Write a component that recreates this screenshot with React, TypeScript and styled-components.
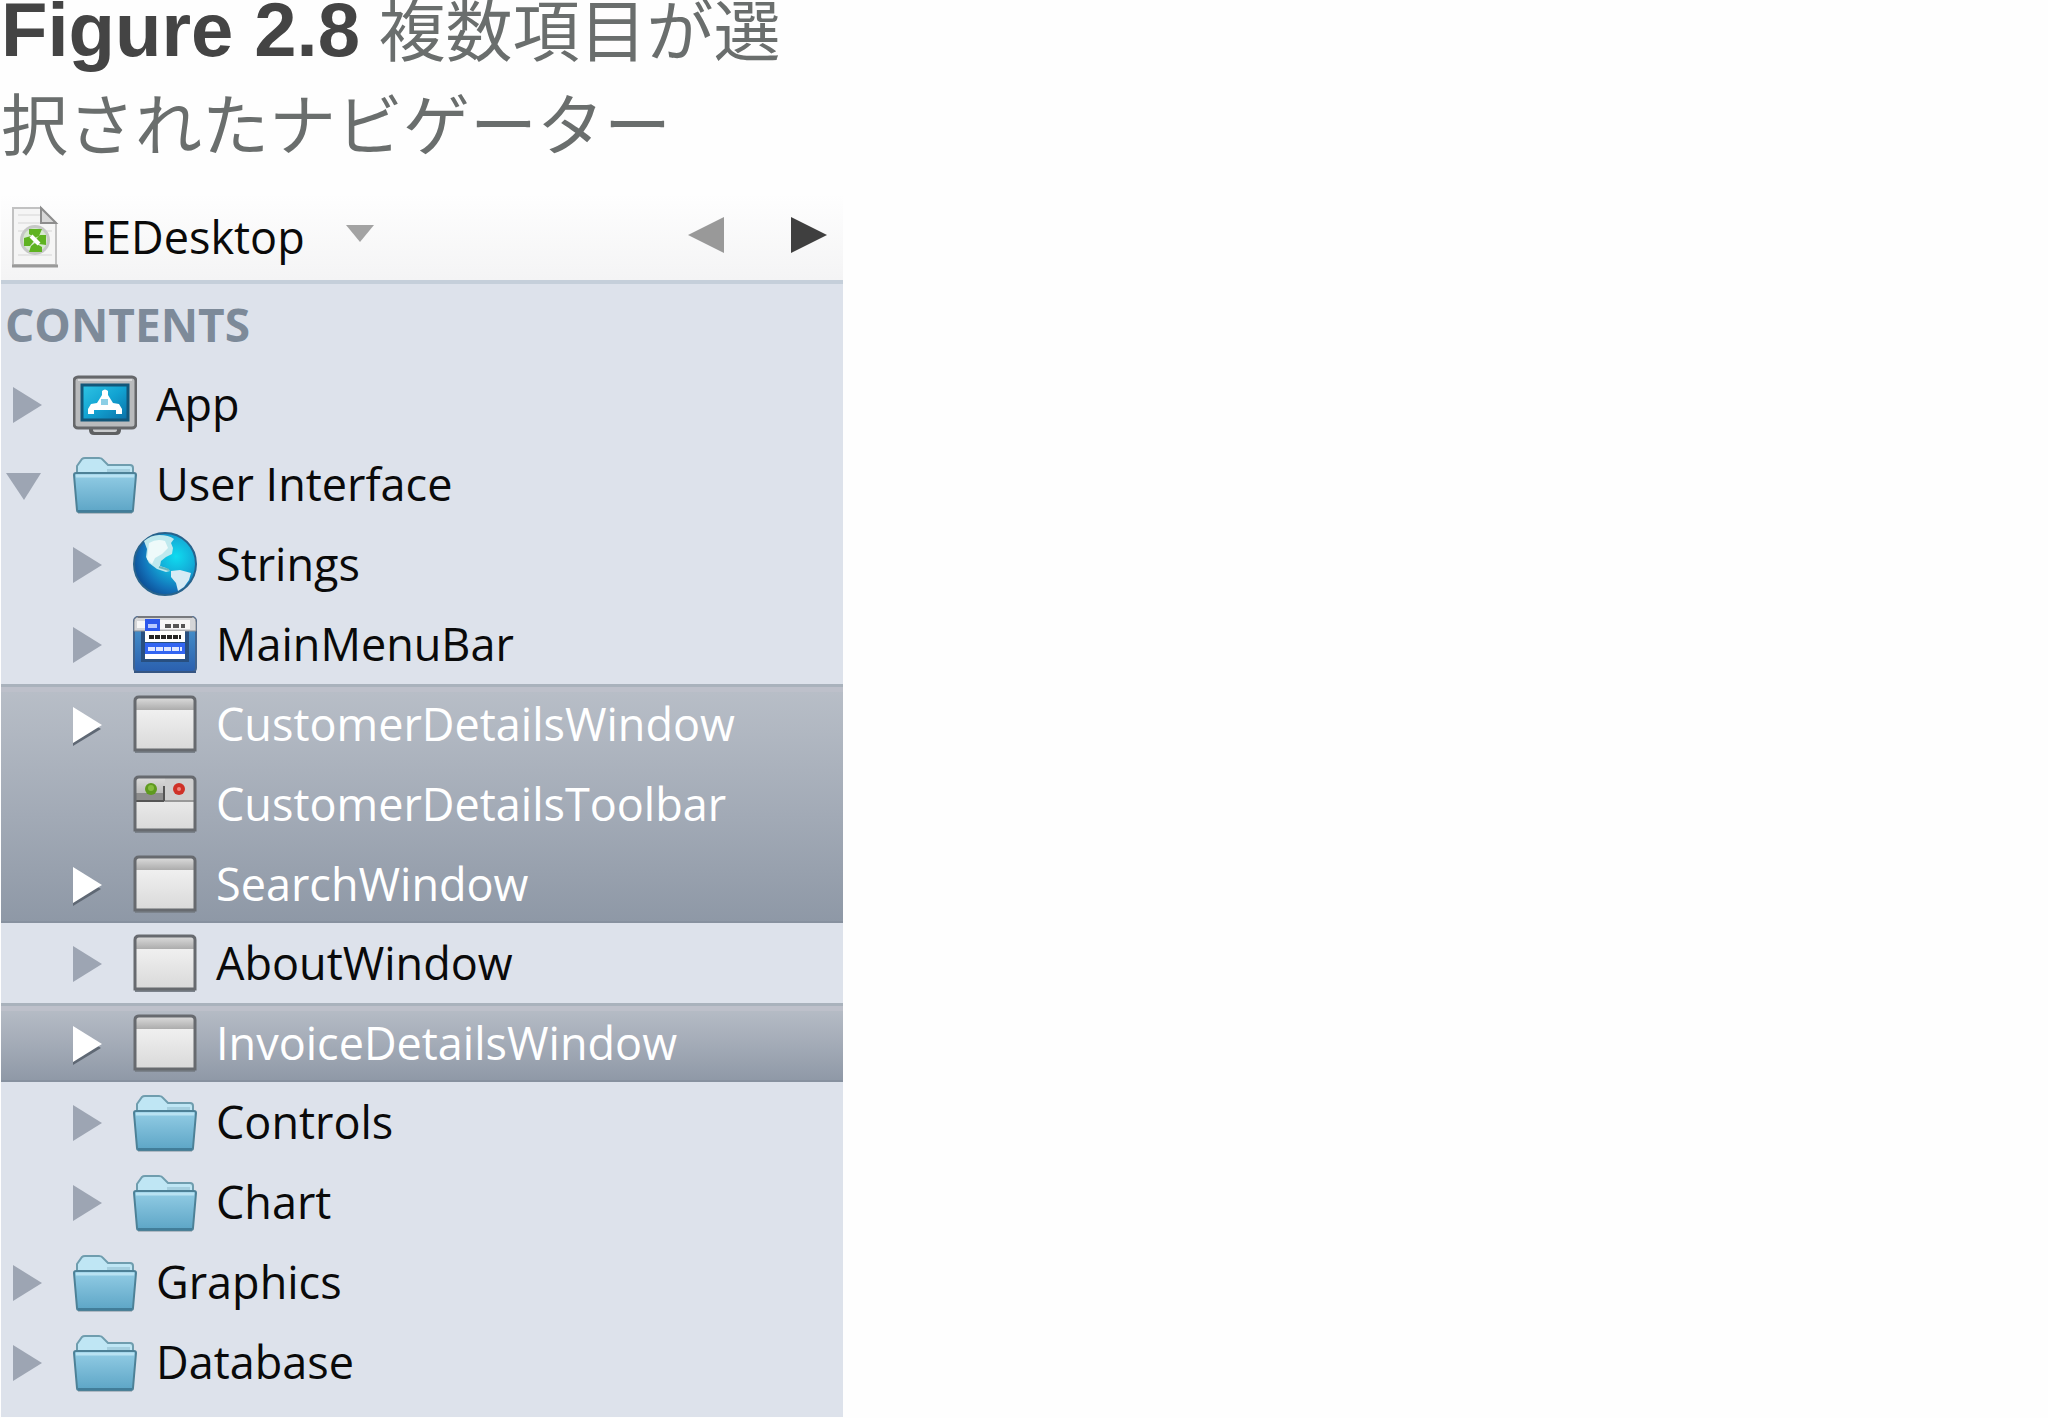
import React, { useState } from "react";
import styled, { createGlobalStyle, css } from "styled-components";

const GlobalStyle = createGlobalStyle`
  body {
    margin: 0;
    background: #fefefe;
  }
  * { box-sizing: border-box; }
`;

const uiFont = `"Open Sans", "Noto Sans", sans-serif`;

const Figure = styled.figure`
  display: flex;
  flex-direction: column;
  max-width: 843px;
  margin: 0;
  padding-left: 1px;
`;

const Caption = styled.figcaption`
  margin: -14px 0 20px;
  padding-right: 16px;
  font: 400 67px/94px "Liberation Sans", "Noto Sans CJK JP", sans-serif;
  color: #6a6e6d;
`;

const CaptionNumber = styled.strong`
  font-size: 76px;
  font-weight: 700;
  line-height: 1;
  color: #444;
`;

const Panel = styled.section`
  background: #dde2eb;
  padding-bottom: 15px;
  font-family: ${uiFont};
  font-size: 45px;
  line-height: 60px;
  color: #0a0a0a;
`;

const buttonReset = css`
  border: 0;
  margin: 0;
  padding: 0;
  background: none;
  color: inherit;
  font: inherit;
  cursor: pointer;
`;

const Header = styled.header`
  display: flex;
  align-items: center;
  justify-content: space-between;
  height: 90px;
  padding: 0 16px 0 8px;
  background: linear-gradient(#fefefe, #f4f4f5);
  border-bottom: 4px solid #c5cfda;
`;

const ProjectPicker = styled.button`
  ${buttonReset}
  display: flex;
  align-items: center;
`;

const ProjectName = styled.span`
  padding: 0 40px 0 20px;
`;

const History = styled.nav`
  display: flex;
  gap: 67px;
`;

const HistoryButton = styled.button`
  ${buttonReset}
  display: flex;
`;

const SectionTitle = styled.h2`
  margin: 0;
  padding: 10px 4px;
  font-size: 46px;
  font-weight: 700;
  color: #7d8a99;
`;

const Tree = styled.div`
  display: flex;
  flex-direction: column;
`;

const Selection = styled.div`
  background: linear-gradient(#b9bfc8, #a2aab6 55%, #8e98a6);
  box-shadow: inset 0 3px #a9b2bc, inset 0 8px #bdc0ca, inset 0 -2px #87919f;
  color: #fff;
  font-weight: 500;

  & > :last-child {
    height: 79px;
  }
`;

const TreeRow = styled.div<{ $level: number }>`
  display: flex;
  align-items: center;
  height: 80px;
  padding-left: ${(p) => 5 + p.$level * 60}px;
`;

const Disclosure = styled.button`
  ${buttonReset}
  display: flex;
  width: 67px;
`;

const DisclosureSpace = styled.span`
  width: 67px;
`;

const Label = styled.span`
  padding-left: 19px;
  white-space: nowrap;
`;

const Icon = styled.svg`
  display: block;
  flex: none;
`;

type Kind = "app" | "folder" | "globe" | "menu" | "window" | "toolbar";

const Arrow = ({ open, light }: { open: boolean; light: boolean }) => (
  <Icon width="36" height="44" viewBox="0 0 36 44">
    {light && <path d="M7 10 35 27 7 44z" fill="#5f6874" />}
    {open ? (
      <path d="M0 11h35L18 38z" fill="#9da5b3" />
    ) : (
      <path d="M7 5 36 23 7 41z" fill={light ? "#fff" : "#9da5b3"} />
    )}
  </Icon>
);

const ItemIcon = ({ kind, id }: { kind: Kind; id: string }) => (
  <Icon width="64" height="64" viewBox="0 0 64 64" aria-hidden="true">
    {kind === "app" && (
      <>
        <defs>
          <linearGradient id={id} x1="0" y1="0" x2="1" y2="1">
            <stop offset="0" stopColor="#2fc4e4" />
            <stop offset=".5" stopColor="#12a3d2" />
            <stop offset="1" stopColor="#0a6fa6" />
          </linearGradient>
        </defs>
        <path d="M16 54h32v4q0 5-5 5H21q-5 0-5-5z" fill="#5e6062" />
        <path d="M20 56h24v2q0 2-3 2H23q-3 0-3-2z" fill="#c9cbcd" />
        <rect x="1" y="5" width="62" height="51" rx="4" fill="#b9bbbd" stroke="#65676a" strokeWidth="3" />
        <path d="M5 8h54" stroke="#d9dadc" strokeWidth="2" />
        <rect x="9" y="13" width="46" height="35" fill={`url(#${id})`} stroke="#12577a" strokeWidth="3" />
        <path
          d="M29 19q3-3 6 0v4l5 8 6 1 3 5v5h-6v-4H21v4h-6v-5l3-5 6-1 5-8z"
          fill="#fff"
        />
        <path d="M28 27h7v6h-7z" fill="#8ccfe6" />
      </>
    )}
    {kind === "folder" && (
      <>
        <defs>
          <linearGradient id={id} x1="0" y1="0" x2="0" y2="1">
            <stop offset="0" stopColor="#93cde5" />
            <stop offset="1" stopColor="#5da5c6" />
          </linearGradient>
        </defs>
        <path d="M5 59h54v3H5z" fill="#aeb9c3" />
        <path d="M4 24V14l5-7q1-1 3-1h14q3 0 4 2l5 5h22q3 0 3 3v10z" fill="#bfe6f4" stroke="#6f9dae" strokeWidth="2" />
        <path d="M34 17h23v5H34z" fill="#a5cfdf" />
        <path d="M1 23q0-2 2-2h58q2 0 2 2l-3 35q0 2-2 2H6q-2 0-2-2z" fill={`url(#${id})`} stroke="#4d8197" strokeWidth="2" />
        <path d="M3 24h58" stroke="#b9e2f2" strokeWidth="3" />
        <path d="M5 59h54" stroke="#427d99" strokeWidth="2" />
      </>
    )}
    {kind === "globe" && (
      <>
        <defs>
          <radialGradient id={id} cx=".68" cy=".38" r=".72">
            <stop offset="0" stopColor="#0fdcf0" />
            <stop offset=".4" stopColor="#13add8" />
            <stop offset=".75" stopColor="#1272b9" />
            <stop offset="1" stopColor="#0d4d94" />
          </radialGradient>
        </defs>
        <circle cx="32" cy="32" r="31" fill={`url(#${id})`} stroke="#28638c" strokeWidth="2" />
        <path d="M11 9q7-6 15-6 10 0 15 4l-3 4 2 5-1 6-6 3-5 4-1 5 6 2 4 3-4 1-9-3-8-6-3-6 1-8z" fill="#bfe9ee" />
        <path d="M16 11q8-5 16-2l3 7-6 6-7 4-3 6-5-5z" fill="#eefafa" />
        <path d="m38 39 9-1 11 3-2 7-5 7-6 4-2-8-5-6z" fill="#d6ebf5" />
        <path d="m26 35 10 3" stroke="#6cb7bd" strokeWidth="2" />
      </>
    )}
    {kind === "menu" && (
      <>
        <defs>
          <linearGradient id={id} x1="0" y1="0" x2="0" y2="1">
            <stop offset="0" stopColor="#4b9bd0" />
            <stop offset="1" stopColor="#2a5fae" />
          </linearGradient>
        </defs>
        <rect x="1" y="5" width="62" height="55" rx="4" fill={`url(#${id})`} stroke="#42638c" strokeWidth="2" />
        <path d="M1 59h62v2H1z" fill="#355582" />
        <path d="M8 18h48v32H8z" fill="#284f80" />
        <path d="M1 10q0-5 5-5h52q5 0 5 5v9H1z" fill="#d5d6d8" stroke="#8b8d91" />
        <path d="M5 5h54" stroke="#77797d" strokeWidth="2" />
        <path d="M4 9h8v7H4zM27 8h30v9H27z" fill="#f7f7f7" />
        <path d="M12 7h15v12H12z" fill="#2d58ec" />
        <path d="M15 14h9" stroke="#b9c9ff" strokeWidth="4" />
        <path d="M32 14h20" stroke="#555" strokeWidth="4" strokeDasharray="6 2" />
        <path d="M12 19h40v11H12zM12 42h40v5H12z" fill="#fff" />
        <path d="M16 25h32" stroke="#252525" strokeWidth="4" strokeDasharray="5 1" />
        <path d="M12 31h40v11H12z" fill="#3265f2" />
        <path d="M15 37h34" stroke="#dfe7ff" strokeWidth="4" strokeDasharray="7 1" />
      </>
    )}
    {(kind === "window" || kind === "toolbar") && (
      <>
        <defs>
          <linearGradient id={id} x1="0" y1="0" x2="0" y2="1">
            <stop offset="0" stopColor="#f7f7f7" />
            <stop offset="1" stopColor="#d9d9d9" />
          </linearGradient>
          <linearGradient id={`${id}-bar`} x1="0" y1="0" x2="0" y2="1">
            <stop offset="0" stopColor="#dadada" />
            <stop offset="1" stopColor="#acacac" />
          </linearGradient>
        </defs>
        <path d="M2 58h60v3H2z" fill="#7b828b" />
        <path d="M2 9q0-4 4-4h52q4 0 4 4v49H2z" fill={`url(#${id})`} />
        {kind === "window" ? (
          <path d="M3 9q0-3 3-3h52q3 0 3 3v9H3z" fill={`url(#${id}-bar)`} />
        ) : (
          <>
            <path d="M3 6h29v24H3z" fill={`url(#${id}-bar)`} />
            <path d="M32 6h29v24H32z" fill="#cfcfcf" />
            <path d="M3 21h28v8H3z" fill="#8d8d8d" />
            <path d="M3 29h28M31 14v15" stroke="#555" strokeWidth="2" />
            <path d="M32 29h29" stroke="#999" strokeWidth="2" />
            <circle cx="18" cy="17" r="6" fill="#5f9a1f" />
            <circle cx="18" cy="16" r="3" fill="#86bd3f" />
            <circle cx="46" cy="17" r="6" fill="#cf3127" />
            <circle cx="46" cy="17" r="2" fill="#f0877f" />
          </>
        )}
        <path d="M2 9q0-4 4-4h52q4 0 4 4v49H2z" fill="none" stroke="#676a6f" strokeWidth="3" />
      </>
    )}
  </Icon>
);

const DocumentIcon = () => (
  <Icon width="52" height="64" viewBox="0 0 52 64" aria-hidden="true">
    <path d="M4 3h28l15 15v42H4z" fill="#f5f5f5" stroke="#c2c2c2" strokeWidth="2" />
    <path d="M9 10h24M9 18h34M9 26h34M9 50h34" stroke="#e5e5e5" strokeWidth="2" />
    <path d="M32 3v15h15z" fill="#d8d8d8" stroke="#8d8d8d" strokeWidth="2" />
    <path d="M3 61h46" stroke="#9a9a9a" strokeWidth="3" />
    <circle cx="26" cy="35" r="15" fill="#c6c8c6" />
    <circle cx="26" cy="35" r="12" fill="#d7ead0" />
    <path d="M20 24h13l-3 7-4 2-6-4zM15 33l7-2 3 5-4 5h-6zM37 30v10l-7-1-3-5 4-4zM20 47l2-6 4-3 7 4v5z" fill="#5fb321" />
    <path d="m22 31 8 8" stroke="#fff" strokeWidth="4" />
  </Icon>
);

interface Item {
  name: string;
  kind: Kind;
  level: number;
  open?: boolean;
  leaf?: boolean;
}

const groups: { selected: boolean; items: Item[] }[] = [
  {
    selected: false,
    items: [
      { name: "App", kind: "app", level: 0 },
      { name: "User Interface", kind: "folder", level: 0, open: true },
      { name: "Strings", kind: "globe", level: 1 },
      { name: "MainMenuBar", kind: "menu", level: 1 },
    ],
  },
  {
    selected: true,
    items: [
      { name: "CustomerDetailsWindow", kind: "window", level: 1 },
      { name: "CustomerDetailsToolbar", kind: "toolbar", level: 1, leaf: true },
      { name: "SearchWindow", kind: "window", level: 1 },
    ],
  },
  { selected: false, items: [{ name: "AboutWindow", kind: "window", level: 1 }] },
  { selected: true, items: [{ name: "InvoiceDetailsWindow", kind: "window", level: 1 }] },
  {
    selected: false,
    items: [
      { name: "Controls", kind: "folder", level: 1 },
      { name: "Chart", kind: "folder", level: 1 },
      { name: "Graphics", kind: "folder", level: 0 },
      { name: "Database", kind: "folder", level: 0 },
    ],
  },
];

const Row = ({ item, selected }: { item: Item; selected: boolean }) => {
  const [open, setOpen] = useState(!!item.open);
  return (
    <TreeRow $level={item.level} role="treeitem" aria-level={item.level + 1} aria-selected={selected}>
      {item.leaf ? (
        <DisclosureSpace />
      ) : (
        <Disclosure aria-label={item.name} aria-expanded={open} onClick={() => setOpen(!open)}>
          <Arrow open={open} light={selected} />
        </Disclosure>
      )}
      <ItemIcon kind={item.kind} id={`icon-${item.name.replace(" ", "-")}`} />
      <Label>{item.name}</Label>
    </TreeRow>
  );
};

export default function App() {
  return (
    <>
      <GlobalStyle />
      <Figure>
        <Caption lang="ja">
          <CaptionNumber>Figure 2.8</CaptionNumber> 複数項目が選択されたナビゲーター
        </Caption>
        <Panel>
          <Header>
            <ProjectPicker>
              <DocumentIcon />
              <ProjectName>EEDesktop</ProjectName>
              <Icon width="30" height="24" viewBox="0 0 30 24">
                <path d="M1 0h28L15 17z" fill="#a3a3a3" />
              </Icon>
            </ProjectPicker>
            <History>
              <HistoryButton aria-label="Back">
                <Icon width="36" height="40" viewBox="0 0 36 40">
                  <path d="M36 0v36L0 18z" fill="#999" />
                </Icon>
              </HistoryButton>
              <HistoryButton aria-label="Forward">
                <Icon width="36" height="40" viewBox="0 0 36 40">
                  <path d="M0 0v36l36-18z" fill="#3f3f3f" />
                </Icon>
              </HistoryButton>
            </History>
          </Header>
          <SectionTitle>CONTENTS</SectionTitle>
          <Tree role="tree" aria-multiselectable="true">
            {groups.map((group) => {
              const rows = group.items.map((item) => (
                <Row key={item.name} item={item} selected={group.selected} />
              ));
              const key = group.items[0].name;
              return group.selected ? (
                <Selection key={key} role="group">{rows}</Selection>
              ) : (
                <React.Fragment key={key}>{rows}</React.Fragment>
              );
            })}
          </Tree>
        </Panel>
      </Figure>
    </>
  );
}
